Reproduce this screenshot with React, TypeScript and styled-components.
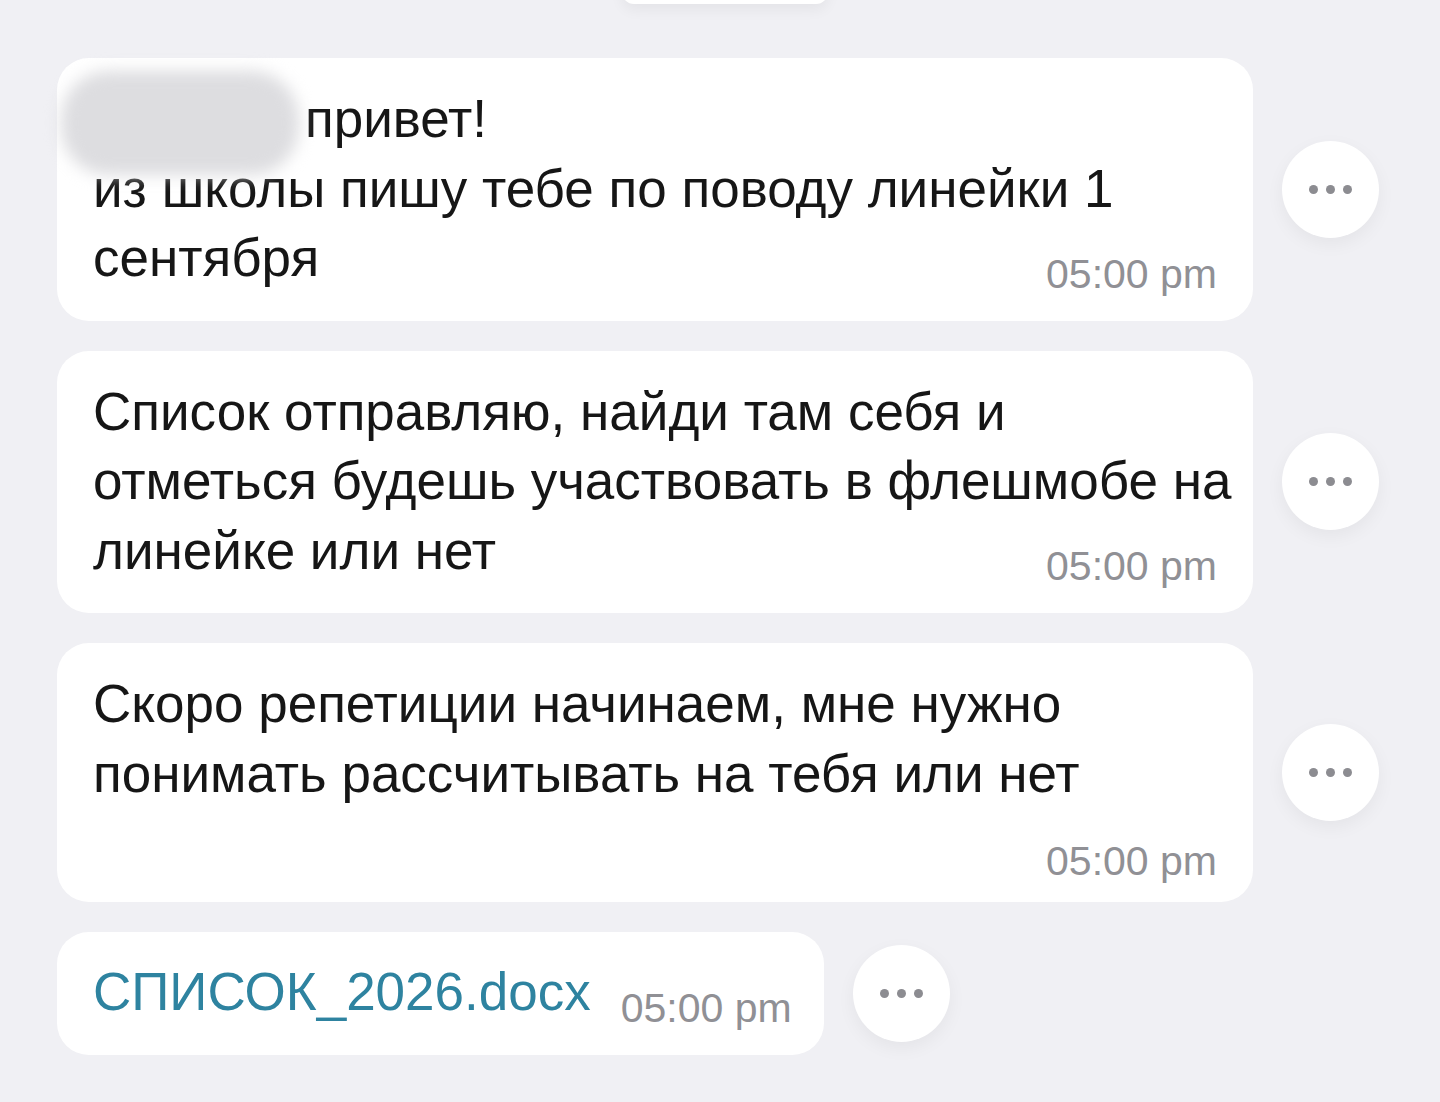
import React from "react";
import styled, { createGlobalStyle } from "styled-components";

const GlobalStyle = createGlobalStyle`
  html, body {
    margin: 0;
    padding: 0;
    background: #f0f0f4;
  }
  body {
    font-family: "Liberation Sans", Arial, "Noto Sans", sans-serif;
    -webkit-font-smoothing: antialiased;
  }
`;

const Page = styled.div`
  width: 1440px;
  height: 1102px;
  overflow: hidden;
  background: #f0f0f4;
`;

const DateStrip = styled.div`
  display: flex;
  justify-content: center;
  padding-left: 10px;
`;

const DatePill = styled.div`
  width: 206px;
  height: 40px;
  margin-top: -36px;
  border-radius: 12px;
  background: #ffffff;
  box-shadow: 0 6px 14px rgba(0, 0, 0, 0.05);
`;

const Feed = styled.div`
  display: flex;
  flex-direction: column;
  gap: 30px;
  padding: 54px 0 0 57px;
`;

const Row = styled.div`
  display: flex;
  align-items: center;
  gap: 29px;
`;

// wide = text message, otherwise the short file bubble
const Bubble = styled.div<{ $wide?: boolean }>`
  box-sizing: border-box;
  width: ${(p) => (p.$wide ? "1196px" : "auto")};
  padding: ${(p) => (p.$wide ? "26px 36px 21px 36px" : "25px 32px 28px 36px")};
  background: #ffffff;
  border-radius: 32px;
`;

const Text = styled.div`
  font-size: 53px;
  line-height: 69.5px;
  color: #161616;
  white-space: nowrap;
`;

const Hidden = styled.span`
  position: relative;
  z-index: 1;
  display: inline-block;
  width: 238px;
  height: 104px;
  margin: -20px 6px -38px -32px;
  border-radius: 48px;
  background: #dddde0;
  filter: blur(8px);
`;

const Time = styled.div<{ $mode: "inline" | "block" }>`
  font-size: 41px;
  line-height: 46px;
  color: #909095;
  text-align: right;
  margin: ${(p) => (p.$mode === "inline" ? "-42px 0 3px" : "30px 0 -3px")};
`;

const FileLine = styled.div`
  display: flex;
  align-items: baseline;
  gap: 30px;
`;

const FileName = styled.span`
  font-size: 53px;
  line-height: 69.5px;
  color: #2e83a0;
`;

const FileTime = styled.span`
  font-size: 41px;
  line-height: 46px;
  color: #909095;
  position: relative;
  top: 12px;
`;

const MoreButton = styled.button`
  flex: 0 0 auto;
  width: 97px;
  height: 97px;
  padding: 0;
  border: none;
  border-radius: 50%;
  background: #ffffff;
  box-shadow: 0 6px 18px rgba(0, 0, 0, 0.05);
  display: flex;
  align-items: center;
  justify-content: center;
  gap: 8px;
  cursor: pointer;
`;

const Dot = styled.span`
  width: 9px;
  height: 9px;
  border-radius: 50%;
  background: #8c8c91;
`;

const More = () => (
  <MoreButton aria-label="more">
    <Dot />
    <Dot />
    <Dot />
  </MoreButton>
);

const messages = [
  {
    lines: ["из школы пишу тебе по поводу линейки 1", "сентября"],
    first: "привет!",
    mode: "inline" as const,
  },
  {
    lines: [
      "Список отправляю, найди там себя и",
      "отметься будешь участвовать в флешмобе на",
      "линейке или нет",
    ],
    mode: "inline" as const,
  },
  {
    lines: ["Скоро репетиции начинаем, мне нужно", "понимать рассчитывать на тебя или нет"],
    mode: "block" as const,
  },
];

export default function App() {
  return (
    <Page>
      <GlobalStyle />
      <DateStrip>
        <DatePill />
      </DateStrip>
      <Feed>
        {messages.map((m, i) => (
          <Row key={i}>
            <Bubble $wide>
              <Text>
                {m.first && (
                  <>
                    <Hidden />
                    {m.first}
                    <br />
                  </>
                )}
                {m.lines.map((l, j) => (
                  <React.Fragment key={j}>
                    {j > 0 && <br />}
                    {l}
                  </React.Fragment>
                ))}
              </Text>
              <Time $mode={m.mode}>05:00 pm</Time>
            </Bubble>
            <More />
          </Row>
        ))}
        <Row>
          <Bubble>
            <FileLine>
              <FileName>СПИСОК_2026.docx</FileName>
              <FileTime>05:00 pm</FileTime>
            </FileLine>
          </Bubble>
          <More />
        </Row>
      </Feed>
    </Page>
  );
}
